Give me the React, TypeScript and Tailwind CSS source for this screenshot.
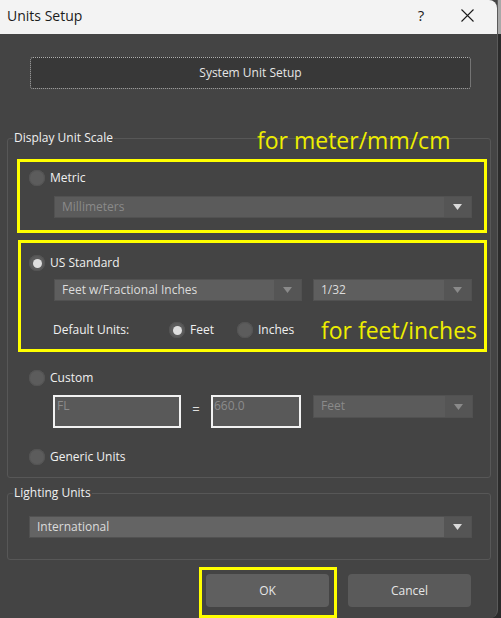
import React from 'react';

const font = "font-['Open_Sans',sans-serif]";

function Radio({ checked }: { checked?: boolean }) {
  return (
    <span className="flex h-4 w-4 shrink-0 items-center justify-center rounded-full bg-[#5c5c5c] shadow-[inset_0_0_0_1px_#545454]">
      {checked && <span className="h-[9px] w-[9px] rounded-full bg-[#dedede]" />}
    </span>
  );
}

function Arrow({ dim }: { dim?: boolean }) {
  return (
    <svg width="9" height="6" viewBox="0 0 9 6">
      <path d="M0 0h9L4.5 6z" fill={dim ? '#8a8a8a' : '#dadada'} />
    </svg>
  );
}

function Select({
  value,
  width,
  disabled,
  dimArrow,
  bg = 'bg-[#5b5b5b]',
  h = 'h-[22px]',
}: {
  value: string;
  width: string;
  disabled?: boolean;
  dimArrow?: boolean;
  bg?: string;
  h?: string;
}) {
  return (
    <div className={`flex ${h} ${width} ${bg} shrink-0 border border-[#515151]`}>
      <span className={`flex-1 pl-[7px] text-[12px] leading-[20px] ${disabled ? 'text-[#8a8a8a]' : 'text-[#dcdcdc]'}`}>
        {value}
      </span>
      <span className="flex w-[27px] items-center justify-center bg-[#555555]">
        <Arrow dim={dimArrow} />
      </span>
    </div>
  );
}

export default function App() {
  return (
    <div className={`flex h-[618px] w-[501px] overflow-hidden bg-[#2b2b2b] ${font}`}>
      <div className="flex h-[618px] w-[498px] shrink-0 flex-col overflow-hidden rounded-br-[8px] border-r border-[#5a5a5a] bg-[#444444]">
        {/* Title bar */}
        <div className="flex h-[34px] shrink-0 items-center rounded-tr-[8px] bg-[#f3f3f3] pb-[3px] pl-[7px] pr-[7px]">
          <span className="flex-1 text-[14px] text-[#1b1b1b]">Units Setup</span>
          <span className="flex w-[46px] justify-center text-[15px] text-[#1b1b1b]">?</span>
          <span className="flex w-[46px] justify-center">
            <svg width="13" height="13" viewBox="0 0 13 13">
              <path d="M0.5 0.5l12 12M12.5 0.5l-12 12" stroke="#1b1b1b" strokeWidth="1.1" />
            </svg>
          </span>
        </div>

        <div className="flex flex-col px-[7px] pt-[23px]">
          <button className="ml-[23px] h-[32px] w-[441px] rounded-[3px] border border-dotted border-[#b0b0b0] bg-[#383838] text-[12px] text-[#e6e6e6]">
            System Unit Setup
          </button>

          {/* Display Unit Scale */}
          <fieldset className="relative mt-[41px] w-[484px] rounded-[3px] border border-[#575757] pb-[12px]">
            <legend className="ml-[5px] px-[1px] text-[12px] leading-[16px] text-[#f0f0f0]">Display Unit Scale</legend>
            <span className="absolute left-[249px] top-[-19px] text-[23px] leading-[26px] text-[#eeee00]">for meter/mm/cm</span>

            <div className="ml-[9px] mt-[13px] flex w-[470px] flex-col border-[3px] border-[#ffff00] pb-[12px] pl-[9px] pt-[8px]">
              <div className="flex h-4 items-center gap-[5px]">
                <Radio />
                <span className="text-[12px] text-[#f0f0f0]">Metric</span>
              </div>
              <div className="ml-[25px] mt-[10px]">
                <Select value="Millimeters" width="w-[418px]" disabled />
              </div>
            </div>

            <div className="ml-[10px] mt-[7px] flex w-[469px] flex-col border-[3px] border-[#ffff00] pb-[9px] pl-[8px] pt-[12px]">
              <div className="flex h-4 items-center gap-[5px]">
                <Radio checked />
                <span className="text-[12px] text-[#f0f0f0]">US Standard</span>
              </div>
              <div className="ml-[25px] mt-[8px] flex gap-[11px]">
                <Select value="Feet w/Fractional Inches" width="w-[248px]" dimArrow bg="bg-[#5e5e5e]" />
                <Select value="1/32" width="w-[159px]" dimArrow bg="bg-[#5e5e5e]" />
              </div>
              <div className="ml-[24px] mt-[19px] flex h-[20px] items-center">
                <span className="w-[116px] text-[12px] text-[#f0f0f0]">Default Units:</span>
                <span className="flex w-[68px] items-center gap-[5px]">
                  <Radio checked />
                  <span className="text-[12px] text-[#f0f0f0]">Feet</span>
                </span>
                <span className="flex w-[84px] items-center gap-[5px]">
                  <Radio />
                  <span className="text-[12px] text-[#f0f0f0]">Inches</span>
                </span>
                <span className="text-[23px] leading-[20px] text-[#eeee00]">for feet/inches</span>
              </div>
            </div>

            <div className="ml-[21px] mt-[18px] flex h-4 items-center gap-[5px]">
              <Radio />
              <span className="text-[12px] text-[#f0f0f0]">Custom</span>
            </div>
            <div className="ml-[45px] mt-[9px] flex items-start">
              <div className="h-[33px] w-[128px] border-2 border-[#f2f2f2] bg-[#595959] pl-[2px] text-[12px] leading-[18px] text-[#8c8c8c]">
                FL
              </div>
              <span className="flex w-[30px] justify-center pt-[5px] text-[13px] text-[#e0e0e0]">=</span>
              <div className="h-[33px] w-[90px] border-2 border-[#f2f2f2] bg-[#595959] pl-[1px] text-[12px] leading-[18px] text-[#8c8c8c]">
                660.0
              </div>
              <div className="ml-[12px]">
                <Select value="Feet" width="w-[160px]" disabled dimArrow h="h-[23px]" />
              </div>
            </div>

            <div className="ml-[21px] mt-[21px] flex h-4 items-center gap-[5px]">
              <Radio />
              <span className="text-[12px] text-[#f0f0f0]">Generic Units</span>
            </div>
          </fieldset>

          {/* Lighting Units */}
          <fieldset className="mt-[7px] w-[484px] rounded-[3px] border border-[#575757] pb-[21px]">
            <legend className="ml-[5px] px-[1px] text-[12px] leading-[16px] text-[#f0f0f0]">Lighting Units</legend>
            <div className="ml-[21px] mt-[15px]">
              <Select value="International" width="w-[443px]" bg="bg-[#646464]" />
            </div>
          </fieldset>

          {/* Buttons */}
          <div className="mt-[7px] flex items-start justify-end pr-[19px]">
            <div className="flex border-[3px] border-[#ffff00] pb-[8px] pl-[4px] pr-[5px] pt-[4px]">
              <button className="h-[33px] w-[123px] rounded-[4px] bg-[#5f5f5f] text-[12px] text-[#e6e6e6]">OK</button>
            </div>
            <button className="ml-[11px] mt-[7px] h-[33px] w-[123px] rounded-[4px] bg-[#5a5a5a] text-[12px] text-[#e6e6e6]">
              Cancel
            </button>
          </div>
        </div>
      </div>
      <div className="flex flex-1 flex-col">
        <div className="h-[34px] bg-[#a8a8a8]" />
        <div className="flex-1 bg-[#2b2b2b]" />
      </div>
    </div>
  );
}
